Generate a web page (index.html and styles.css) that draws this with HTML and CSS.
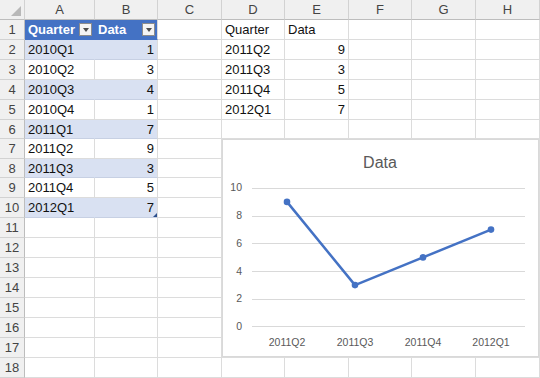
FILE: index.html
```html
<!DOCTYPE html>
<html>
<head>
<meta charset="utf-8">
<title>Data</title>
<link rel="stylesheet" href="styles.css">
</head>
<body>
<div class="sheet">
    <div class="cell ch corner"><span class="selall"></span></div>
    <div class="cell ch">A</div>
    <div class="cell ch">B</div>
    <div class="cell ch">C</div>
    <div class="cell ch">D</div>
    <div class="cell ch">E</div>
    <div class="cell ch">F</div>
    <div class="cell ch">G</div>
    <div class="cell ch">H</div>

    <div class="cell rh">1</div>
    <div class="cell th first">Quarter<span class="filter"></span></div>
    <div class="cell th">Data<span class="filter"></span></div>
    <div class="cell"></div>
    <div class="cell">Quarter</div>
    <div class="cell">Data</div>
    <div class="cell"></div>
    <div class="cell"></div>
    <div class="cell"></div>

    <div class="cell rh">2</div>
    <div class="cell band first">2010Q1</div>
    <div class="cell band num">1</div>
    <div class="cell"></div>
    <div class="cell">2011Q2</div>
    <div class="cell num">9</div>
    <div class="cell"></div>
    <div class="cell"></div>
    <div class="cell"></div>

    <div class="cell rh">3</div>
    <div class="cell">2010Q2</div>
    <div class="cell num">3</div>
    <div class="cell"></div>
    <div class="cell">2011Q3</div>
    <div class="cell num">3</div>
    <div class="cell"></div>
    <div class="cell"></div>
    <div class="cell"></div>

    <div class="cell rh">4</div>
    <div class="cell band first">2010Q3</div>
    <div class="cell band num">4</div>
    <div class="cell"></div>
    <div class="cell">2011Q4</div>
    <div class="cell num">5</div>
    <div class="cell"></div>
    <div class="cell"></div>
    <div class="cell"></div>

    <div class="cell rh">5</div>
    <div class="cell">2010Q4</div>
    <div class="cell num">1</div>
    <div class="cell"></div>
    <div class="cell">2012Q1</div>
    <div class="cell num">7</div>
    <div class="cell"></div>
    <div class="cell"></div>
    <div class="cell"></div>

    <div class="cell rh">6</div>
    <div class="cell band first">2011Q1</div>
    <div class="cell band num">7</div>
    <div class="cell"></div>
    <div class="cell"></div>
    <div class="cell"></div>
    <div class="cell"></div>
    <div class="cell"></div>
    <div class="cell"></div>

    <div class="cell rh">7</div>
    <div class="cell">2011Q2</div>
    <div class="cell num">9</div>
    <div class="cell"></div>
    <div class="cell"></div>
    <div class="cell"></div>
    <div class="cell"></div>
    <div class="cell"></div>
    <div class="cell"></div>

    <div class="cell rh">8</div>
    <div class="cell band first">2011Q3</div>
    <div class="cell band num">3</div>
    <div class="cell"></div>
    <div class="cell"></div>
    <div class="cell"></div>
    <div class="cell"></div>
    <div class="cell"></div>
    <div class="cell"></div>

    <div class="cell rh">9</div>
    <div class="cell">2011Q4</div>
    <div class="cell num">5</div>
    <div class="cell"></div>
    <div class="cell"></div>
    <div class="cell"></div>
    <div class="cell"></div>
    <div class="cell"></div>
    <div class="cell"></div>

    <div class="cell rh">10</div>
    <div class="cell band first">2012Q1</div>
    <div class="cell band num handle">7</div>
    <div class="cell"></div>
    <div class="cell"></div>
    <div class="cell"></div>
    <div class="cell"></div>
    <div class="cell"></div>
    <div class="cell"></div>

    <div class="cell rh">11</div>
    <div class="cell"></div><div class="cell"></div><div class="cell"></div><div class="cell"></div>
    <div class="cell"></div><div class="cell"></div><div class="cell"></div><div class="cell"></div>

    <div class="cell rh">12</div>
    <div class="cell"></div><div class="cell"></div><div class="cell"></div><div class="cell"></div>
    <div class="cell"></div><div class="cell"></div><div class="cell"></div><div class="cell"></div>

    <div class="cell rh">13</div>
    <div class="cell"></div><div class="cell"></div><div class="cell"></div><div class="cell"></div>
    <div class="cell"></div><div class="cell"></div><div class="cell"></div><div class="cell"></div>

    <div class="cell rh">14</div>
    <div class="cell"></div><div class="cell"></div><div class="cell"></div><div class="cell"></div>
    <div class="cell"></div><div class="cell"></div><div class="cell"></div><div class="cell"></div>

    <div class="cell rh">15</div>
    <div class="cell"></div><div class="cell"></div><div class="cell"></div><div class="cell"></div>
    <div class="cell"></div><div class="cell"></div><div class="cell"></div><div class="cell"></div>

    <div class="cell rh">16</div>
    <div class="cell"></div><div class="cell"></div><div class="cell"></div><div class="cell"></div>
    <div class="cell"></div><div class="cell"></div><div class="cell"></div><div class="cell"></div>

    <div class="cell rh">17</div>
    <div class="cell"></div><div class="cell"></div><div class="cell"></div><div class="cell"></div>
    <div class="cell"></div><div class="cell"></div><div class="cell"></div><div class="cell"></div>

    <div class="cell rh">18</div>
    <div class="cell"></div><div class="cell"></div><div class="cell"></div><div class="cell"></div>
    <div class="cell"></div><div class="cell"></div><div class="cell"></div><div class="cell"></div>

    <!-- chart floats over D7:H17 -->
    <div class="chart">
        <svg width="317" height="218" viewBox="0 0 317 218">
            <text class="title" x="158" y="29" text-anchor="middle">Data</text>
            <g class="grid">
                <line x1="30" y1="49.5" x2="303" y2="49.5"/>
                <line x1="30" y1="77.5" x2="303" y2="77.5"/>
                <line x1="30" y1="104.5" x2="303" y2="104.5"/>
                <line x1="30" y1="132.5" x2="303" y2="132.5"/>
                <line x1="30" y1="160.5" x2="303" y2="160.5"/>
                <line x1="30" y1="187.5" x2="303" y2="187.5"/>
            </g>
            <g class="axis" text-anchor="end">
                <text x="20" y="52">10</text>
                <text x="20" y="80">8</text>
                <text x="20" y="108">6</text>
                <text x="20" y="136">4</text>
                <text x="20" y="163">2</text>
                <text x="20" y="191">0</text>
            </g>
            <g class="axis" text-anchor="middle">
                <text x="65" y="207">2011Q2</text>
                <text x="133" y="207">2011Q3</text>
                <text x="201" y="207">2011Q4</text>
                <text x="269" y="207">2012Q1</text>
            </g>
            <polyline class="series" points="65,62.9 133,146.1 201,118.4 269,90.6"/>
            <g class="marker">
                <circle cx="65" cy="62.9" r="3.3"/>
                <circle cx="133" cy="146.1" r="3.3"/>
                <circle cx="201" cy="118.4" r="3.3"/>
                <circle cx="269" cy="90.6" r="3.3"/>
            </g>
        </svg>
    </div>
</div>
</body>
</html>
```

FILE: styles.css
```css
body {margin:0;font-family:"Liberation Sans",Arial,sans-serif;font-size:13px;color:#111;background:#fff;}

.sheet {
    position:relative;
    display:grid;
    grid-template-columns:25px 70px 63px 64px 63px 64px 63px 64px 64px;
    grid-template-rows:20px repeat(5,20px) 19px 20px 19px repeat(10,20px);
    width:540px;height:378px;overflow:hidden;
}

.cell {
    display:flex;align-items:center;
    padding:0 3px;
    border-right:1px solid #dcdcdc;border-bottom:1px solid #dcdcdc;
    white-space:nowrap;overflow:hidden;
}
.num {justify-content:flex-end;}

/* row and column headers */
.ch {background:#f0f0f0;color:#444;justify-content:center;border-right-color:#d2d2d2;border-bottom-color:#bdbdbd;}
.rh {background:#f0f0f0;color:#444;justify-content:center;padding:0;border-right-color:#bdbdbd;border-bottom-color:#d2d2d2;}
.corner {justify-content:flex-end;align-items:flex-end;padding:0 3px 3px 0;}
.selall {width:0;height:0;border-left:10px solid transparent;border-bottom:10px solid #b8b8b8;}

/* the table A1:B10 */
.th {background:#4472c4;color:#fff;font-weight:bold;justify-content:space-between;padding-right:2px;border-bottom-color:#4472c4;}
.th.first {border-right-color:#4472c4;}
.band {background:#d9e1f2;border-bottom-color:#c7d0e3;}
.band.first {border-right-color:#d9e1f2;}
.filter {
    flex:none;display:flex;align-items:center;justify-content:center;
    width:13px;height:13px;box-sizing:border-box;
    border:1px solid #8c8c8c;background:#f4f4f4;
}
.filter::after {content:"";border-left:3.5px solid transparent;border-right:3.5px solid transparent;border-top:4px solid #4d4d4d;}
.handle {position:relative;}
.handle::after {content:"";position:absolute;right:0;bottom:0;border-left:4px solid transparent;border-bottom:4px solid #2b4e8c;}

/* chart */
.chart {position:absolute;left:222px;top:139px;width:317px;height:218px;box-sizing:border-box;border:1px solid #d9d9d9;background:#fff;}
.chart svg {display:block;position:absolute;left:-1px;top:-1px;}
.title {font-size:16px;fill:#595959;}
.axis text {font-size:10.5px;fill:#595959;}
.grid line {stroke:#d9d9d9;stroke-width:1;}
.series {fill:none;stroke:#4472c4;stroke-width:2.5;stroke-linejoin:round;stroke-linecap:round;}
.marker circle {fill:#4472c4;}
```
